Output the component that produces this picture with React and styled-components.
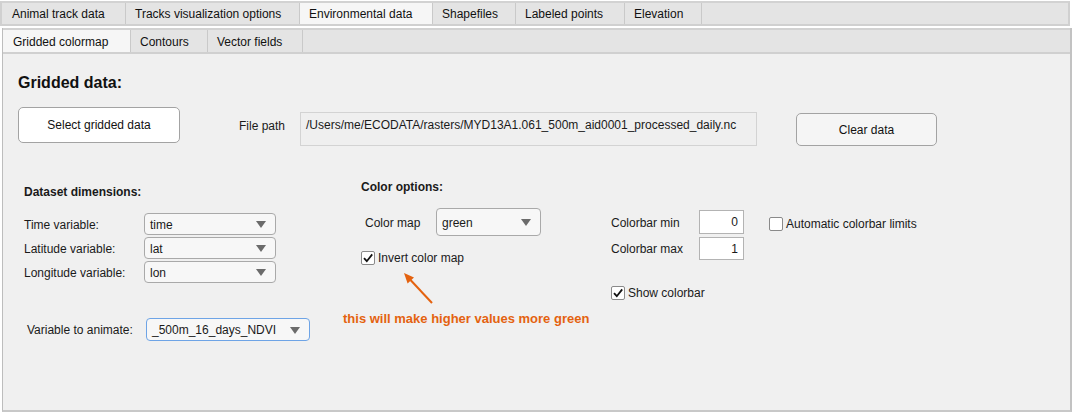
import React from 'react';
import styled, { createGlobalStyle } from 'styled-components';

const Global = createGlobalStyle`
  body {
    margin: 0;
    background: #ffffff;
    font-family: "Liberation Sans", Arial, sans-serif;
    font-size: 12px;
    color: #1a1a1a;
  }
`;

const outerTabs = [
  { label: 'Animal track data', w: 124 },
  { label: 'Tracks visualization options', w: 174 },
  { label: 'Environmental data', w: 133, active: true },
  { label: 'Shapefiles', w: 83 },
  { label: 'Labeled points', w: 109 },
  { label: 'Elevation', w: 77 },
];

const innerTabs = [
  { label: 'Gridded colormap', w: 128, active: true },
  { label: 'Contours', w: 77 },
  { label: 'Vector fields', w: 95 },
];

const dims = [
  { label: 'Time variable:', value: 'time' },
  { label: 'Latitude variable:', value: 'lat' },
  { label: 'Longitude variable:', value: 'lon' },
];

function Dropdown({ value, width, height, focused }) {
  return (
    <Select width={width} height={height} focused={focused}>
      <span>{value}</span>
      <svg width="10" height="7" viewBox="0 0 10 7">
        <polygon points="0,0 10,0 5,7" fill="#6b6b6b" />
      </svg>
    </Select>
  );
}

function Check({ checked, children }) {
  return (
    <CheckRow>
      <Box>
        {checked && (
          <svg width="12" height="12" viewBox="0 0 12 12">
            <path d="M2 6.2 L4.8 9.2 L10.2 2.4" fill="none" stroke="#111" strokeWidth="1.8" />
          </svg>
        )}
      </Box>
      <span>{children}</span>
    </CheckRow>
  );
}

export default function App() {
  return (
    <>
      <Global />
      <Window>
        <TabBar outer>
          {outerTabs.map(t => (
            <Tab key={t.label} width={t.w} active={t.active}>{t.label}</Tab>
          ))}
          <Filler />
        </TabBar>
        <Inner>
          <TabBar>
            {innerTabs.map(t => (
              <Tab key={t.label} width={t.w} active={t.active}>{t.label}</Tab>
            ))}
            <Filler />
          </TabBar>
          <Panel>
            <Title>Gridded data:</Title>
            <FileRow>
              <Button width={162} height={36}>Select gridded data</Button>
              <PathLabel>File path</PathLabel>
              <PathBox>/Users/me/ECODATA/rasters/MYD13A1.061_500m_aid0001_processed_daily.nc</PathBox>
              <Button width={141} height={33} light top={6} left={39}>Clear data</Button>
            </FileRow>

            <Lower>
              <DimsColumn>
                <Heading top={5}>Dataset dimensions:</Heading>
                <DimList>
                  {dims.map(d => (
                    <FieldRow key={d.label}>
                      <FieldLabel width={120}>{d.label}</FieldLabel>
                      <Dropdown value={d.value} width={132} height={22} />
                    </FieldRow>
                  ))}
                </DimList>
                <AnimateRow>
                  <FieldLabel width={119}>Variable to animate:</FieldLabel>
                  <Dropdown value="_500m_16_days_NDVI" width={164} height={23} focused />
                </AnimateRow>
              </DimsColumn>

              <ColorColumn>
                <Heading>Color options:</Heading>
                <MapRow>
                  <FieldLabel width={71}>Color map</FieldLabel>
                  <Dropdown value="green" width={105} height={28} />
                </MapRow>
                <InvertRow>
                  <Check checked>Invert color map</Check>
                </InvertRow>
                <Arrow width="120" height="40" viewBox="0 0 120 40">
                  <line x1="89" y1="38" x2="67.5" y2="15" stroke="#e4620f" strokeWidth="2" />
                  <polygon points="61,8 71,12.4 64.6,18.4" fill="#e4620f" />
                </Arrow>
                <Note>this will make higher values more green</Note>
              </ColorColumn>

              <BarColumn>
                <BarRow>
                  <FieldLabel width={88}>Colorbar min</FieldLabel>
                  <NumBox height={24}>0</NumBox>
                  <AutoCheck>
                    <Check>Automatic colorbar limits</Check>
                  </AutoCheck>
                </BarRow>
                <BarRow gap={3}>
                  <FieldLabel width={88}>Colorbar max</FieldLabel>
                  <NumBox height={23}>1</NumBox>
                </BarRow>
                <ShowRow>
                  <Check checked>Show colorbar</Check>
                </ShowRow>
              </BarColumn>
            </Lower>
          </Panel>
        </Inner>
      </Window>
    </>
  );
}

const Window = styled.div`
  width: 1072px;
  height: 414px;
  display: flex;
  flex-direction: column;
  padding-top: 1px;
  box-sizing: border-box;
`;

const TabBar = styled.div`
  display: flex;
  height: ${p => (p.outer ? '25px' : '26px')};
  box-sizing: border-box;
  width: ${p => (p.outer ? '1070px' : 'auto')};
  border-top: 2px solid #d2d2d2;
  border-bottom: 2px solid #d0d0d0;
  border-left: ${p => (p.outer ? '2px solid #d0d0d0' : 'none')};
  border-right: ${p => (p.outer ? '2px solid #d0d0d0' : 'none')};
  background: #e4e4e4;
  margin-bottom: ${p => (p.outer ? '2px' : '0')};
`;

const Tab = styled.div`
  width: ${p => p.width}px;
  flex: none;
  box-sizing: border-box;
  display: flex;
  align-items: center;
  padding-left: 9px;
  padding-top: 1px;
  border-right: 1px solid #c9c9c9;
  background: ${p => (p.active ? '#f6f6f6' : '#e4e4e4')};
  white-space: nowrap;
  font-size: 12px;
  color: #111;
  &:first-child {
    padding-left: 10px;
  }
`;

const Filler = styled.div`
  flex: 1;
`;

const Inner = styled.div`
  margin-left: 2px;
  width: 1070px;
  flex: 1;
  display: flex;
  flex-direction: column;
  box-sizing: border-box;
  border-left: 1px solid #bdbdbd;
  border-right: 2px solid #c2c2c2;
  border-bottom: 2px solid #c8c8c8;
  margin-bottom: 2px;
  background: #f0f0f0;
`;

const Panel = styled.div`
  flex: 1;
  padding: 19px 0 0 15px;
  background: #f0f0f0;
`;

const Title = styled.div`
  font-size: 16px;
  font-weight: bold;
  line-height: 20px;
  color: #111;
`;

const FileRow = styled.div`
  display: flex;
  align-items: flex-start;
  margin-top: 14px;
`;

const Button = styled.div`
  width: ${p => p.width}px;
  height: ${p => p.height}px;
  margin-top: ${p => p.top || 0}px;
  margin-left: ${p => p.left || 0}px;
  box-sizing: border-box;
  display: flex;
  align-items: center;
  justify-content: center;
  border: 1px solid #a3a3a3;
  border-radius: 5px;
  background: ${p => (p.light ? '#f5f5f5' : '#ffffff')};
  font-size: 12px;
  color: #111;
`;

const PathLabel = styled.div`
  width: 61px;
  margin-left: 59px;
  margin-top: 12px;
  line-height: 14px;
`;

const PathBox = styled.div`
  width: 457px;
  height: 34px;
  margin-top: 5px;
  box-sizing: border-box;
  padding: 5px 5px;
  border: 1px solid #d3d3d3;
  background: #efefef;
  line-height: 14px;
  white-space: nowrap;
`;

const Lower = styled.div`
  display: flex;
  margin-top: 34px;
`;

const DimsColumn = styled.div`
  width: 319px;
  padding-left: 6px;
`;

const Heading = styled.div`
  font-weight: bold;
  font-size: 12px;
  line-height: 14px;
  margin-top: ${p => p.top || 0}px;
`;

const DimList = styled.div`
  display: flex;
  flex-direction: column;
  gap: 2px;
  margin-top: 14px;
`;

const FieldRow = styled.div`
  display: flex;
  align-items: center;
`;

const FieldLabel = styled.div`
  width: ${p => p.width}px;
  flex: none;
  white-space: nowrap;
  line-height: 14px;
  padding-top: 1px;
`;

const AnimateRow = styled(FieldRow)`
  margin-top: 35px;
  padding-left: 3px;
`;

const Select = styled.div`
  width: ${p => p.width}px;
  height: ${p => p.height}px;
  box-sizing: border-box;
  display: flex;
  align-items: center;
  justify-content: space-between;
  padding: 1px 9px 0 5px;
  border: ${p => (p.focused ? '1.5px solid #6ea4e6' : '1px solid #a9a9a9')};
  border-radius: 4px;
  background: #f7f7f7;
  font-size: 12px;
`;

const ColorColumn = styled.div`
  width: 268px;
  display: flex;
  flex-direction: column;
  & > ${Heading} {
    padding-left: 18px;
  }
`;

const MapRow = styled(FieldRow)`
  margin-top: 14px;
  padding-left: 22px;
`;

const InvertRow = styled.div`
  margin-top: 15px;
  padding-left: 18px;
`;

const CheckRow = styled.div`
  display: flex;
  align-items: center;
  gap: 3px;
  line-height: 14px;
`;

const Box = styled.div`
  width: 14px;
  height: 14px;
  box-sizing: border-box;
  border: 1px solid #8a8a8a;
  border-radius: 2px;
  background: #ffffff;
  display: flex;
  align-items: center;
  justify-content: center;
`;

const Arrow = styled.svg`
  display: block;
`;

const Note = styled.div`
  margin-top: 6px;
  font-size: 13px;
  font-weight: bold;
  line-height: 16px;
  color: #e4620f;
  white-space: nowrap;
`;

const BarColumn = styled.div`
  display: flex;
  flex-direction: column;
  padding-top: 30px;
`;

const BarRow = styled(FieldRow)`
  margin-top: ${p => p.gap || 0}px;
`;

const NumBox = styled.div`
  width: 45px;
  height: ${p => p.height}px;
  box-sizing: border-box;
  border: 1px solid #b3b3b3;
  background: #ffffff;
  display: flex;
  align-items: center;
  justify-content: flex-end;
  padding-right: 5px;
`;

const AutoCheck = styled.div`
  margin-left: 25px;
  margin-top: 4px;
`;

const ShowRow = styled.div`
  margin-top: 26px;
`;
